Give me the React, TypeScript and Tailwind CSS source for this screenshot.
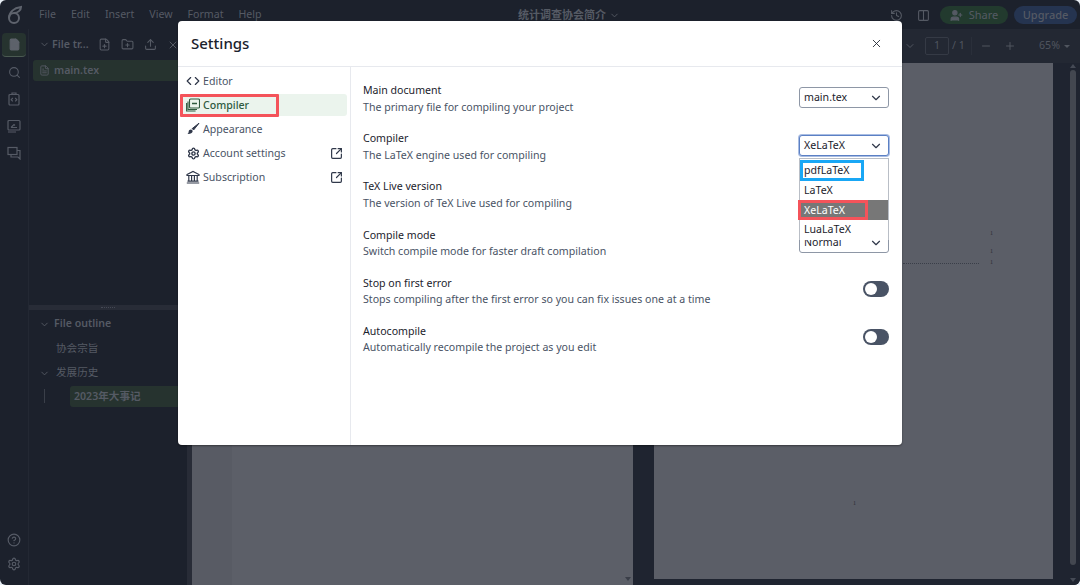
import { ChevronDown, Code, CircleHelp, Settings as Gear, FileText, Search, X, Upload, FilePlus, FolderPlus, History, Columns2, UserPlus, Plus, Minus, MoreVertical, SquareArrowOutUpRight } from "lucide-react";

const font = "font-['Noto_Sans','Noto_Sans_CJK_SC',sans-serif]";

function Logo() {
  return (
    <svg width="18" height="20" viewBox="0 0 18 20" fill="none" stroke="#5e636d" strokeWidth="2">
      <circle cx="8" cy="13" r="5" />
      <path d="M3 13C3 7 8 3 15 2C15 5 12 8 8 8" />
    </svg>
  );
}

function CodeTaskIcon() {
  return (
    <svg width="14" height="14" viewBox="0 0 14 14" fill="none" stroke="#565b66" strokeWidth="1.2">
      <rect x="2" y="2.5" width="10" height="10.5" rx="1" />
      <path d="M5 2.5V1h4v1.5M5.8 6L4.2 7.7l1.6 1.7M8.2 6l1.6 1.7-1.6 1.7" />
    </svg>
  );
}

function ReviewIcon() {
  return (
    <svg width="14" height="14" viewBox="0 0 14 14" fill="none" stroke="#565b66" strokeWidth="1.2">
      <rect x="1" y="1.5" width="12" height="9.5" rx="1" />
      <path d="M1 13h8M4 8.5l3-3 1 1M4 8.5h6" />
    </svg>
  );
}

function ChatIcon() {
  return (
    <svg width="14" height="14" viewBox="0 0 14 14" fill="none" stroke="#565b66" strokeWidth="1.2">
      <rect x="1" y="1.5" width="9" height="7" />
      <path d="M4 8.5v2.5h7l2 2V4.5h-3" />
    </svg>
  );
}

function PdfStackIcon() {
  return (
    <svg width="14" height="14" viewBox="0 0 14 14" fill="none" stroke="#2f5a3f" strokeWidth="1.1">
      <rect x="3.5" y="1" width="10" height="9" rx="1" />
      <path d="M2 3.5v8h9M0.6 5v8h9" />
      <path d="M6 5.5h5" strokeWidth="1.6" />
    </svg>
  );
}

function BrushIcon() {
  return (
    <svg width="14" height="14" viewBox="0 0 14 14" fill="#30384a">
      <path d="M13 1.2L6.2 6.6l1.4 1.4L13 1.2z" stroke="#30384a" strokeWidth="1" strokeLinejoin="round" />
      <path d="M4.8 7.6c1.4 0 2 1 1.8 2-.3 1.6-2.6 2.8-5.2 2.4 1.2-.8 1-1.6 1.3-2.6.2-1 1-1.8 2.1-1.8z" />
    </svg>
  );
}

function BankIcon() {
  return (
    <svg width="14" height="14" viewBox="0 0 14 14" fill="none" stroke="#30384a" strokeWidth="1.2">
      <path d="M1 4.5L7 1.5l6 3v1H1zM2.8 6v5M5.6 6v5M8.4 6v5M11.2 6v5M1.5 11.2h11M.8 13h12.4" />
    </svg>
  );
}

function Rail() {
  return (
    <aside className="w-[29px] shrink-0 flex flex-col items-center border-r border-[#232833] pt-[4px] pb-[14px]">
      <div className="w-[24px] h-[24px] rounded-[4px] bg-[#26332f] border-b border-[#4b5a52] flex items-center justify-center mb-[9px]">
        <FileText size={13} className="text-[#5d626b]" fill="#5d626b" />
      </div>
      <Search size={13} className="text-[#565b66] mb-[13px]" />
      <div className="mb-[13px]">
        <CodeTaskIcon />
      </div>
      <div className="mb-[13px]">
        <ReviewIcon />
      </div>
      <ChatIcon />
      <div className="mt-auto flex flex-col items-center gap-[10px]">
        <CircleHelp size={14} className="text-[#565b66]" />
        <Gear size={14} className="text-[#565b66]" />
      </div>
    </aside>
  );
}

function FilePanel() {
  return (
    <section className="w-[158px] shrink-0 flex flex-col text-[#555a64] text-[10.6px] font-semibold">
      <div className="h-[31px] flex items-center pl-[10px]">
        <ChevronDown size={11} className="mr-[2px] shrink-0" />
        <span className="whitespace-nowrap w-[46px] shrink-0">File tr...</span>
        <FilePlus size={13} className="mr-[10px] shrink-0" />
        <FolderPlus size={13} className="mr-[10px] shrink-0" />
        <Upload size={13} className="mr-[10px] shrink-0" />
        <X size={12} className="shrink-0" />
      </div>
      <div className="h-[21px] ml-[4px] rounded-l-[3px] bg-[#26332f] flex items-center pl-[6px]">
        <FileText size={11} className="mr-[4px]" />
        <span className="flex-1">main.tex</span>
        <MoreVertical size={11} className="mr-[1px]" />
      </div>
      <div className="h-[224px] shrink-0" />
      <div className="h-[5px] bg-[#282c37] shrink-0 flex items-center justify-center">
        <div className="w-[14px] border-t border-dotted border-[#454955]" />
      </div>
      <div className="h-[24px] mt-[2px] flex items-center pl-[10px] gap-[4px]">
        <ChevronDown size={11} />
        <span>File outline</span>
      </div>
      <div className="h-[24px] mt-[1px] flex items-center pl-[27px] font-normal">协会宗旨</div>
      <div className="h-[24px] flex items-center pl-[10px] gap-[6px] font-normal">
        <ChevronDown size={11} />
        <span>发展历史</span>
      </div>
      <div className="h-[21px] mt-[1px] ml-[41px] rounded-l-[3px] bg-[#26332f] flex items-center pl-[4px] relative">
        2023年大事记
        <div className="absolute left-[-26px] top-[3px] h-[14px] border-l border-[#3a3f49]" />
      </div>
    </section>
  );
}

function TopBar() {
  return (
    <header className="h-[29px] shrink-0 flex items-center pt-[1px] text-[#555a64] text-[10.6px] relative">
      <div className="w-[29px] flex justify-center">
        <Logo />
      </div>
      <nav className="flex gap-[15px] ml-[10px]">
        <span>File</span>
        <span>Edit</span>
        <span>Insert</span>
        <span>View</span>
        <span>Format</span>
        <span>Help</span>
      </nav>
      <div className="absolute left-[518px] top-[7px] flex items-center gap-[3px] font-semibold text-[11px]">
        <span>统计调查协会简介</span>
        <ChevronDown size={11} />
      </div>
      <div className="ml-auto flex items-center pr-[3px]">
        <History size={13} className="mr-[14px]" />
        <Columns2 size={13} className="mr-[10px]" />
        <div className="w-[68px] h-[18px] rounded-full bg-[#223a2e] flex items-center justify-center gap-[6px] mr-[6px]">
          <UserPlus size={13} fill="currentColor" />
          <span className="text-[11px]">Share</span>
        </div>
        <div className="w-[63px] h-[18px] rounded-full bg-[#253450] flex items-center justify-center font-medium text-[11px]">Upgrade</div>
      </div>
    </header>
  );
}

function EditorPane() {
  return (
    <section className="w-[446px] shrink-0 flex border-l-[5px] border-[#282c37]">
      <div className="w-[40px] bg-[#585b64]" />
      <div className="flex-1 bg-[#5c5f68] relative">
        <div className="absolute right-[2px] bottom-[4px] w-0 h-0 border-x-[3px] border-x-transparent border-t-[4px] border-t-[#3a3e48]" />
      </div>
    </section>
  );
}

function PdfMark({ className }: { className: string }) {
  return <span className={`absolute text-[6px] leading-[6px] text-[#2a2d35] font-['Liberation_Serif',serif] ${className}`}>1</span>;
}

function PdfPane() {
  return (
    <section className="flex-1 min-w-0 flex flex-col bg-[#1f2430]">
      <div className="h-[34px] shrink-0 bg-[#232833] flex items-center justify-end pr-[10px] text-[#50555f] text-[10.6px]">
        <ChevronDown size={12} className="mr-[9px]" />
        <div className="w-[24px] h-[18px] border border-[#353a45] rounded-[2px] flex items-center justify-center mr-[3px]">1</div>
        <span className="w-[12px] mr-[7px] whitespace-nowrap">/ 1</span>
        <div className="w-px h-[18px] bg-[#2a2f3a] mr-[8px]" />
        <Minus size={12} className="mr-[12px]" />
        <Plus size={12} className="mr-[23px]" />
        <span className="mr-[4px]">65%</span>
        <div className="w-0 h-0 border-x-[3px] border-x-transparent border-t-[3px] border-t-[#50555f]" />
      </div>
      <div className="flex-1 flex min-h-0 pl-[21px] pb-[6px]">
        <div className="w-[399px] bg-[#5b5e67] relative">
          <PdfMark className="left-[199px] top-[437px]" />
          <PdfMark className="left-[336px] top-[167px]" />
          <PdfMark className="left-[336px] top-[185px]" />
          <PdfMark className="left-[336px] top-[196px]" />
          <div className="absolute left-[249px] top-[200px] w-[76px] border-t border-dotted border-[#3a3e48]" />
        </div>
        <div className="flex-1 flex justify-end pr-[4px] pl-[16px]">
          <div className="w-[6px] flex flex-col items-center">
            <div className="w-0 h-0 mt-[1px] border-x-[3px] border-x-transparent border-b-[4px] border-b-[#454a55]" />
            <div className="w-[6px] h-[495px] mt-[2px] rounded-full bg-[#434750]" />
            <div className="w-0 h-0 mt-auto mb-[-3px] border-x-[3px] border-x-transparent border-t-[4px] border-t-[#454a55]" />
          </div>
        </div>
      </div>
    </section>
  );
}

function NavItem({ icon, label, active, external }: { icon: React.ReactNode; label: string; active?: boolean; external?: boolean }) {
  return (
    <div className={`h-[22px] mb-[2px] rounded-[3px] flex items-center pl-[6px] pr-[4px] gap-[3px] relative ${active ? "bg-[#ebf4ed] text-[#2f5a3f] font-medium" : "text-[#495365]"}`}>
      <span className={`w-[14px] flex justify-center shrink-0 ${active ? "text-[#2f5a3f]" : "text-[#30384a]"}`}>{icon}</span>
      <span className="flex-1 pt-[2px]">{label}</span>
      {external && <SquareArrowOutUpRight size={13} strokeWidth={2.2} className="text-[#30384a]" />}
      {active && <div className="absolute left-0 top-0 w-[99px] h-[23px] border-[3px] border-[#f4535a] rounded-[1px]" />}
    </div>
  );
}

function SelectBox({ value, focused }: { value: string; focused?: boolean }) {
  return (
    <div className={`w-[90px] h-[21px] rounded-[3px] bg-white flex items-center pl-[4px] pr-[5px] text-[#1b222c] ${focused ? "border border-[#5b80c4] shadow-[0_0_0_1px_#a9bde3]" : "border border-[#8e97a6]"}`}>
      <span className="flex-1 pt-[1px]">{value}</span>
      <ChevronDown size={14} className="text-[#30384a]" />
    </div>
  );
}

function SettingRow({ title, desc, low, children }: { title: string; desc: string; low?: boolean; children?: React.ReactNode }) {
  return (
    <div className="h-[48px] flex items-start relative">
      <div className="flex-1 min-w-0">
        <div className={`text-[#1b222c] h-[17px] ${low ? "leading-[18px]" : "leading-[16px]"}`}>{title}</div>
        <div className="text-[#495365] leading-[16px]">{desc}</div>
      </div>
      {children}
    </div>
  );
}

function Toggle() {
  return (
    <div className="w-[26px] h-[16px] rounded-full bg-[#495365] flex items-center pl-[2px]">
      <div className="w-[12px] h-[12px] rounded-full bg-white" />
    </div>
  );
}

function CompilerMenu() {
  return (
    <div className="absolute right-0 top-[28px] w-[90px] bg-white border border-[#b9bec6] border-b-0 text-[#1b222c] z-10">
      <div className="h-[21px] flex items-center pl-[4px] pt-[2px] relative">
        pdfLaTeX
        <div className="absolute left-0 top-[1px] w-[64px] h-[21px] border-[3px] border-[#19a7f5]" />
      </div>
      <div className="h-[20px] flex items-center pl-[4px] pt-[2px]">LaTeX</div>
      <div className="h-[20px] flex items-center pl-[4px] pt-[2px] bg-[#777777] text-white relative">
        XeLaTeX
        <div className="absolute left-[-2px] top-0 w-[70px] h-[20px] border-[3px] border-[#f4535a]" />
      </div>
      <div className="h-[20px] flex items-center pl-[4px]">LuaLaTeX</div>
    </div>
  );
}

function SettingsModal() {
  return (
    <div className="absolute left-[178px] top-[21px] w-[724px] h-[424px] bg-white rounded-[4px] shadow-[0_1px_2px_rgba(0,0,0,0.4)] flex flex-col text-[10.6px]">
      <div className="h-[46px] shrink-0 border-b border-[#e7e9ee] flex items-center pl-[13px] pr-[19px]">
        <h1 className="text-[15px] text-[#1b222c] flex-1 font-medium">Settings</h1>
        <X size={13} strokeWidth={1.6} className="text-[#1b222c]" />
      </div>
      <div className="flex-1 flex min-h-0">
        <div className="w-[173px] shrink-0 border-r border-[#e7e9ee] pt-[3px] pl-[2px] pr-[3px]">
          <NavItem icon={<Code size={14} />} label="Editor" />
          <NavItem icon={<PdfStackIcon />} label="Compiler" active />
          <NavItem icon={<BrushIcon />} label="Appearance" />
          <NavItem icon={<Gear size={13} strokeWidth={2.6} />} label="Account settings" external />
          <NavItem icon={<BankIcon />} label="Subscription" external />
        </div>
        <div className="flex-1 pl-[12px] pr-[13px] pt-[15px]">
          <SettingRow title="Main document" desc="The primary file for compiling your project">
            <div className="mt-[5px]">
              <SelectBox value="main.tex" />
            </div>
          </SettingRow>
          <SettingRow title="Compiler" desc="The LaTeX engine used for compiling">
            <div className="mt-[5px]">
              <SelectBox value="XeLaTeX" focused />
            </div>
            <CompilerMenu />
          </SettingRow>
          <SettingRow title="TeX Live version" desc="The version of TeX Live used for compiling" />
          <SettingRow title="Compile mode" desc="Switch compile mode for faster draft compilation" low>
            <div className="mt-[6px]">
              <SelectBox value="Normal" />
            </div>
          </SettingRow>
          <SettingRow title="Stop on first error" desc="Stops compiling after the first error so you can fix issues one at a time" low>
            <div className="mt-[7px]">
              <Toggle />
            </div>
          </SettingRow>
          <SettingRow title="Autocompile" desc="Automatically recompile the project as you edit" low>
            <div className="mt-[7px]">
              <Toggle />
            </div>
          </SettingRow>
        </div>
      </div>
    </div>
  );
}

export default function App() {
  return (
    <div className="w-[1080px] h-[585px] bg-[#e8eef5]">
      <div className={`w-full h-full overflow-hidden relative rounded-[6px] bg-[#1c212c] flex flex-col ${font}`}>
        <TopBar />
        <div className="flex-1 flex min-h-0">
          <Rail />
          <FilePanel />
          <EditorPane />
          <PdfPane />
        </div>
        <SettingsModal />
      </div>
    </div>
  );
}
